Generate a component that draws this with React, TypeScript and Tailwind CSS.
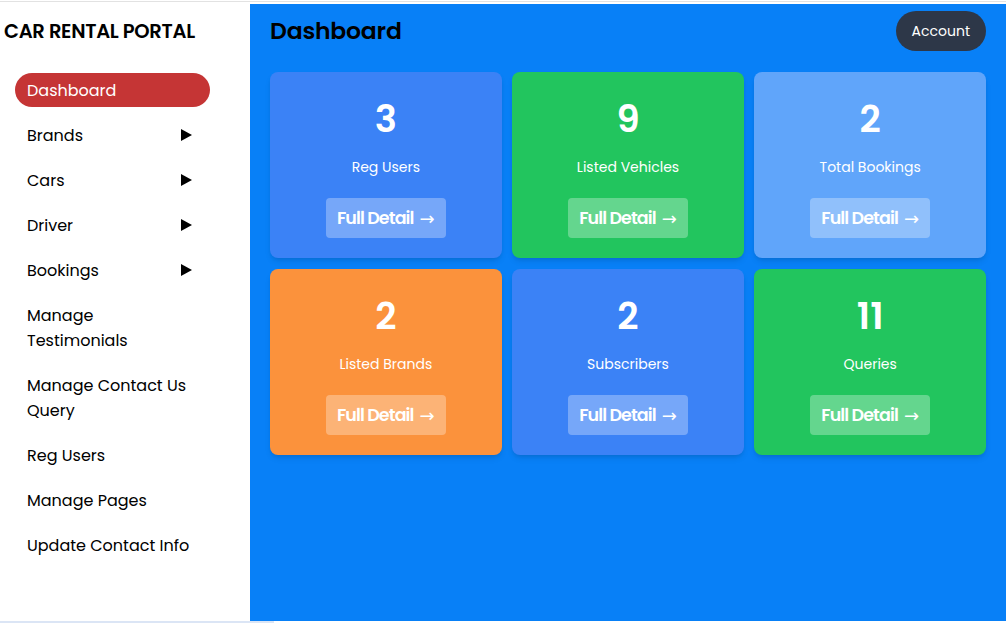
import React from "react";

const font = { fontFamily: "Poppins, Inter, 'Noto Sans', sans-serif" };

const menu: { label: React.ReactNode; arrow?: boolean; active?: boolean }[] = [
  { label: "Dashboard", active: true },
  { label: "Brands", arrow: true },
  { label: "Cars", arrow: true },
  { label: "Driver", arrow: true },
  { label: "Bookings", arrow: true },
  { label: <>Manage<br />Testimonials</> },
  { label: <>Manage Contact Us<br />Query</> },
  { label: "Reg Users" },
  { label: "Manage Pages" },
  { label: "Update Contact Info" },
];

const cards = [
  { n: "3", label: "Reg Users", bg: "bg-[#3b82f6]" },
  { n: "9", label: "Listed Vehicles", bg: "bg-[#22c55e]" },
  { n: "2", label: "Total Bookings", bg: "bg-[#60a5fa]" },
  { n: "2", label: "Listed Brands", bg: "bg-[#fb923c]" },
  { n: "2", label: "Subscribers", bg: "bg-[#3b82f6]" },
  { n: "11", label: "Queries", bg: "bg-[#22c55e]" },
];

function Arrow() {
  return (
    <svg width="11" height="12" viewBox="0 0 11 12">
      <path d="M0 0 L11 6 L0 12 Z" fill="#000" />
    </svg>
  );
}

export default function App() {
  return (
    <div className="w-[1006px] h-[623px] bg-white overflow-hidden" style={font}>
      <div className="h-[1px] bg-white" />
      <div className="h-[1px] bg-[#e2e2e2]" />
      <div className="flex h-[619px]">
        <aside className="w-[250px] bg-white pt-[18px]">
          <div className="pl-[4px] text-[19.5px] leading-[24px] font-semibold text-black tracking-[-0.3px]">CAR RENTAL PORTAL</div>
          <nav className="mt-[29px] ml-[15px] w-[195px] flex flex-col gap-[11px]">
            {menu.map((m, i) => (
              <div
                key={i}
                className={`flex items-center justify-between pl-3 pr-[18px] py-[4.5px] text-[16px] leading-[25px] rounded-full ${m.active ? "bg-[#c53535] text-white" : "text-black"}`}
              >
                <span>{m.label}</span>
                {m.arrow && <Arrow />}
              </div>
            ))}
          </nav>
        </aside>
        <main className="flex-1 mt-[2px] h-[617px] bg-[#0880f7] px-5 pt-[7px]">
          <div className="flex items-center justify-between h-[40px] mb-[21px]">
            <h1 className="text-[23.5px] font-semibold text-black leading-none tracking-[-0.2px]">Dashboard</h1>
            <button className="h-[40px] px-4 rounded-full bg-[#2d3748] text-white text-[14px]">Account</button>
          </div>
          <div className="grid grid-cols-3 gap-x-[10.5px] gap-y-[11px]">
            {cards.map((c, i) => (
              <div key={i} className={`${c.bg} rounded-lg shadow-md flex flex-col items-center pt-[27px] pb-5 text-white`}>
                <div className="text-[37px] leading-[40px] font-semibold">{c.n}</div>
                <div className="mt-[18px] text-[14px] leading-[20px]">{c.label}</div>
                <button className="mt-[21px] h-[40px] w-[120px] rounded bg-white/30 text-[17.5px] font-semibold text-white flex items-center justify-center tracking-[-0.9px]">
                  Full Detail
                  <span className="ml-[6px] text-[18px] font-normal tracking-normal" style={{ fontFamily: "'DejaVu Sans', sans-serif" }}>→</span>
                </button>
              </div>
            ))}
          </div>
        </main>
      </div>
      <div className="h-[2px] w-[274px] bg-[#dbe5f5]" />
    </div>
  );
}
